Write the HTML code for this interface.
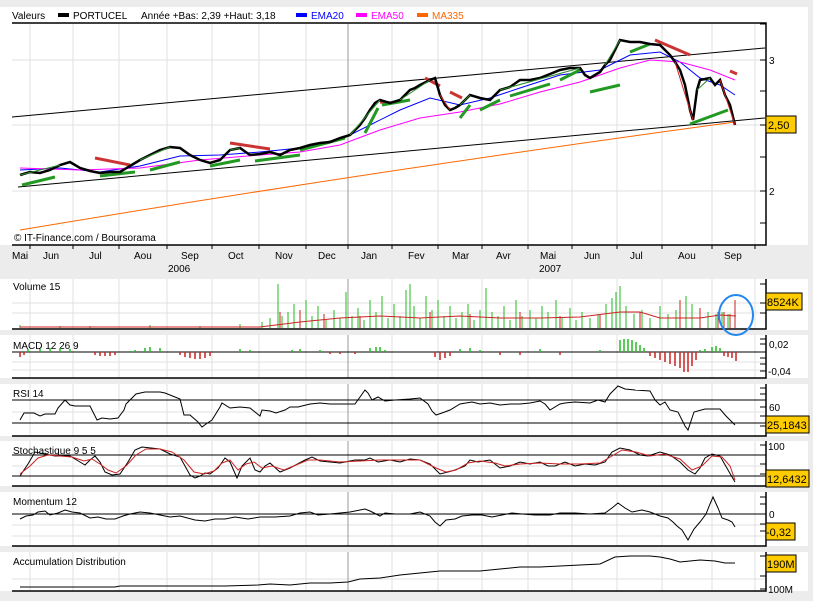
<!DOCTYPE html>
<html><head><meta charset="utf-8"><style>
html,body{margin:0;padding:0;background:#fff;}
svg{display:block;font-family:"Liberation Sans",sans-serif;}
</style></head><body>
<svg width="819" height="613" viewBox="0 0 819 613" xmlns="http://www.w3.org/2000/svg">
<rect x="0" y="0" width="813" height="601" fill="#ececec"/>
<g fill="#fff">
<rect x="0" y="7" width="808" height="238"/>
<rect x="0" y="279" width="808" height="51"/>
<rect x="0" y="335" width="808" height="43"/>
<rect x="0" y="384" width="808" height="52"/>
<rect x="0" y="441" width="808" height="45"/>
<rect x="0" y="492" width="808" height="54"/>
<rect x="0" y="552" width="808" height="39"/>
</g>
<g stroke="#e2e2e2" stroke-width="1">
<path d="M30 24V245M73 24V245M119 24V245M167 24V245M212 24V245M259 24V245M306 24V245M392 24V245M438 24V245M482 24V245M528 24V245M572 24V245M617 24V245M662 24V245M712 24V245M755 24V245"/>
<path d="M30 279V329M73 279V329M119 279V329M167 279V329M212 279V329M259 279V329M306 279V329M392 279V329M438 279V329M482 279V329M528 279V329M572 279V329M617 279V329M662 279V329M712 279V329M755 279V329"/>
<path d="M30 335V378M73 335V378M119 335V378M167 335V378M212 335V378M259 335V378M306 335V378M392 335V378M438 335V378M482 335V378M528 335V378M572 335V378M617 335V378M662 335V378M712 335V378M755 335V378"/>
<path d="M30 384V436M73 384V436M119 384V436M167 384V436M212 384V436M259 384V436M306 384V436M392 384V436M438 384V436M482 384V436M528 384V436M572 384V436M617 384V436M662 384V436M712 384V436M755 384V436"/>
<path d="M30 441V486M73 441V486M119 441V486M167 441V486M212 441V486M259 441V486M306 441V486M392 441V486M438 441V486M482 441V486M528 441V486M572 441V486M617 441V486M662 441V486M712 441V486M755 441V486"/>
<path d="M30 492V546M73 492V546M119 492V546M167 492V546M212 492V546M259 492V546M306 492V546M392 492V546M438 492V546M482 492V546M528 492V546M572 492V546M617 492V546M662 492V546M712 492V546M755 492V546"/>
<path d="M30 552V591M73 552V591M119 552V591M167 552V591M212 552V591M259 552V591M306 552V591M392 552V591M438 552V591M482 552V591M528 552V591M572 552V591M617 552V591M662 552V591M712 552V591M755 552V591"/>
<path d="M12 60H765M12 125H765M12 191H765M12 303H765M12 313H765M12 362H765M12 370H765M12 412H765M12 466H765M12 525H765M12 536H765M12 579H765"/>
</g>
<path d="M348 24V245M348 279V329M348 335V378M348 384V436M348 441V486M348 492V546M348 552V591" stroke="#999" stroke-width="1"/>
<g stroke="#000" stroke-width="1.5" fill="none">
<path d="M12 23H766V245H12"/>
<path d="M766 279V329H12M766 335V378H12M766 384V436H12M766 441V486H12M766 492V546H12M766 552V591H12"/>
</g>
<g stroke="#000" stroke-width="1">
<path d="M760 24H766M760 60H766M760 91H766M760 125H766M760 157H766M760 191H766M760 223H766"/>
<path d="M30 245v4M73 245v4M119 245v4M167 245v4M212 245v4M259 245v4M306 245v4M348 245v4M392 245v4M438 245v4M482 245v4M528 245v4M572 245v4M617 245v4M662 245v4M712 245v4M755 245v4"/>
<path d="M760 284H766M760 303H766M760 313H766M760 339H766M760 344H766M760 352H766M760 358H766M760 364H766M760 371H766M760 388H766M760 394H766M760 407H766M760 416H766M760 426H766M760 445H766M760 464H766M760 474H766M760 497H766M760 504H766M760 514H766M760 524H766M760 531H766M760 556H766M760 576H766M760 589H766"/>
<path d="M12 352H766M12 400H766M12 423H766M12 455H766M12 476H766M12 514H766"/>
</g>
<g font-size="10">
<text x="12" y="19">Valeurs</text>
<rect x="58" y="13" width="11" height="4" fill="#000"/>
<text x="73" y="19">PORTUCEL</text>
<text x="141" y="19">Année +Bas: 2,39 +Haut: 3,18</text>
<rect x="296" y="13" width="11" height="4" fill="#0000ff"/>
<text x="311" y="19" fill="#0000ff">EMA20</text>
<rect x="356" y="13" width="11" height="4" fill="#ff00ff"/>
<text x="371" y="19" fill="#ff00ff">EMA50</text>
<rect x="417" y="13" width="11" height="4" fill="#ff6600"/>
<text x="432" y="19" fill="#ff6600">MA335</text>
<text x="14" y="241">© IT-Finance.com / Boursorama</text>
<text x="769" y="64">3</text><text x="769" y="195">2</text>
<g>
<text x="12" y="259">Mai</text><text x="43" y="259">Jun</text><text x="89" y="259">Jul</text><text x="134" y="259">Aou</text><text x="181" y="259">Sep</text><text x="228" y="259">Oct</text><text x="275" y="259">Nov</text><text x="318" y="259">Dec</text><text x="361" y="259">Jan</text><text x="408" y="259">Fev</text><text x="452" y="259">Mar</text><text x="496" y="259">Avr</text><text x="540" y="259">Mai</text><text x="584" y="259">Jun</text><text x="630" y="259">Jul</text><text x="678" y="259">Aou</text><text x="724" y="259">Sep</text>
<text x="168" y="272">2006</text><text x="539" y="272">2007</text>
</g>
<text x="13" y="290">Volume 15</text>
<text x="13" y="349">MACD 12 26 9</text>
<text x="13" y="397">RSI 14</text>
<text x="13" y="454">Stochastique 9 5 5</text>
<text x="13" y="505">Momentum 12</text>
<text x="13" y="565">Accumulation Distribution</text>
<text x="769" y="348">0,02</text><text x="768" y="375">-0,04</text>
<text x="769" y="411">60</text><text x="768" y="450">100</text>
<text x="769" y="518">0</text><text x="768" y="593">100M</text>
</g>
<g fill="none" stroke-width="1">
<path d="M12 117L765 48" stroke="#000"/>
<path d="M18 187L765 118" stroke="#000"/>
<path d="M20 230Q380 170 735 122" stroke="#ff6600"/>
<path d="M20 170L60 168 100 172 140 166 180 156 220 155 260 152 300 148 340 140 370 125 400 110 430 98 460 105 490 98 520 88 560 75 600 70 630 55 660 52 680 62 700 78 720 85 735 95" stroke="#0000ff"/>
<path d="M20 168L80 170 140 168 200 160 260 155 300 152 340 145 380 130 420 118 460 112 500 104 540 92 580 82 620 68 650 60 680 62 710 70 735 80" stroke="#ff00ff"/>
</g>
<g fill="none" stroke-width="3" stroke-linecap="butt">
<path d="M95 158L130 165M230 143L270 149M380 102L392 103M425 78L440 86M450 92L462 98M655 40L690 55M730 71L737 74" stroke="#cc3333"/>
<path d="M22 185L55 177M100 176L135 172M150 170L180 162M210 166L240 160M255 161L300 155M300 150L345 138M365 133L378 108M382 105L410 100M460 118L470 105M480 110L500 100M510 96L550 84M560 80L580 70M590 92L620 85M630 52L650 44M690 124L728 110" stroke="#229922"/>
</g>
<path d="M20 175L30 172 40 173 50 170 60 165 70 162 80 168 90 171 100 173 110 172 120 172 130 166 140 160 150 155 160 150 170 147 180 148 190 155 200 160 210 163 220 160 230 150 240 148 250 155 260 154 270 152 280 155 290 150 300 148 310 145 320 143 330 142 340 138 350 135 360 125 365 118 370 110 375 103 380 100 390 103 400 100 410 90 415 88 420 85 430 80 435 78 440 95 445 105 450 110 455 108 460 105 470 95 480 98 490 100 495 95 500 90 510 87 520 80 530 80 540 78 550 74 560 70 570 68 580 68 585 75 590 78 600 72 605 65 610 60 615 50 620 40 630 42 640 42 650 44 660 45 665 50 670 55 675 62 680 70 685 85 690 110 693 120 697 90 700 80 710 78 715 85 720 80 725 95 730 105 735 125" fill="none" stroke="#000" stroke-width="2.5"/>
<path d="M20 175L60 165M140 160L170 147M230 150L240 148M350 135L380 100M400 100L430 80M460 105L470 95M500 90L580 68M605 65L620 40M697 90L710 78" fill="none" stroke="#2a8a2a" stroke-width="1"/>
<path d="M440 95L450 110M675 62L693 120M720 80L735 125" fill="none" stroke="#cc2222" stroke-width="1"/>
<g font-size="11">
<rect x="766" y="116" width="30" height="17" fill="#ffcc00" stroke="#000"/><text x="768" y="129">2,50</text>
<rect x="766" y="293" width="36" height="17" fill="#ffcc00" stroke="#000"/><text x="767" y="306">8524K</text>
<rect x="766" y="416" width="43" height="17" fill="#ffcc00" stroke="#000"/><text x="767" y="429">25,1843</text>
<rect x="766" y="470" width="43" height="17" fill="#ffcc00" stroke="#000"/><text x="767" y="483">12,6432</text>
<rect x="766" y="523" width="29" height="17" fill="#ffcc00" stroke="#000"/><text x="766" y="536">-0,32</text>
<rect x="766" y="555" width="30" height="17" fill="#ffcc00" stroke="#000"/><text x="767" y="568">190M</text>
</g>
<path d="M20 328V325M60 328V326M90 328V326M150 328V325M200 328V326M240 328V324M262 328V322M270 328V318M278 328V284M282 328V316M288 328V312M294 328V304M300 328V318M306 328V300M312 328V316M318 328V306M326 328V320M334 328V310M340 328V318M346 328V292M352 328V316M358 328V308M364 328V320M370 328V300M376 328V312M382 328V296M388 328V318M394 328V304M400 328V316M406 328V290M410 328V284M414 328V306M420 328V318M426 328V296M432 328V310M438 328V300M444 328V316M450 328V306M456 328V318M462 328V312M468 328V304M474 328V320M480 328V310M486 328V288M492 328V312M498 328V316M504 328V306M510 328V320M516 328V300M522 328V316M530 328V310M536 328V318M542 328V306M548 328V312M556 328V300M562 328V318M570 328V308M576 328V320M582 328V312M590 328V318M598 328V314M606 328V304M612 328V298M616 328V292M620 328V286M626 328V306M634 328V314M642 328V310M650 328V318M660 328V306M668 328V314M676 328V310M686 328V296M692 328V304M700 328V316M708 328V312M716 328V314M722 328V312M728 328V314" stroke="#22bb22" stroke-width="1"/>
<path d="M280 328V312M300 328V310M324 328V314M360 328V316M430 328V312M470 328V314M520 328V312M560 328V316M600 328V314M640 328V312M680 328V300M700 328V308M718 328V312M724 328V312M730 328V314M735 328V300" stroke="#cc2222" stroke-width="1"/>
<path d="M20 327H260L300 322 340 318 380 316 420 318 460 316 500 318 540 318 580 317 620 312 640 312 660 318 700 318 720 315 736 316" fill="none" stroke="#cc2222" stroke-width="1"/>
<ellipse cx="736" cy="315" rx="17" ry="20" fill="none" stroke="#2288ee" stroke-width="2"/>
<path d="M28 349v3M40 349v3M50 348v4M60 348v4M70 349v3M130 351v1M135 350v2M145 348v4M150 347v5M160 348v4M240 349v3M250 350v2M292 350v2M300 349v3M320 350v2M370 348v4M376 347v5M380 347v5M385 350v2M460 349v3M470 348v4M480 350v2M540 349v3M600 350v2M620 340v12M624 339v13M628 339v13M632 340v12M636 342v10M640 345v7M644 348v4M700 350v2M705 349v3M712 347v5M716 346v6M720 348v4" stroke="#22bb22" stroke-width="1.5"/>
<path d="M20 352v5M24 352v3M95 352v3M100 352v4M105 352v4M110 352v4M115 352v3M180 352v3M185 352v5M190 352v6M195 352v7M200 352v7M205 352v6M210 352v4M330 352v2M340 352v2M355 352v2M435 352v5M440 352v8M445 352v6M450 352v4M500 352v3M520 352v3M560 352v3M650 352v4M655 352v6M660 352v8M665 352v10M670 352v12M675 352v14M680 352v16M684 352v20M688 352v20M692 352v14M696 352v8M724 352v4M728 352v5M732 352v6M736 352v9" stroke="#cc2222" stroke-width="1.5"/>
<path d="M20 420L24 413 34 413 40 416 45 414 55 414 58 408 65 400 70 405 75 406 90 406 97 420 102 418 110 419 118 418 124 410 126 404 130 400 136 394 145 392 160 392 165 393 180 399 184 415 190 415 198 422 202 427 206 424 212 420 220 407 222 403 230 408 240 407 250 408 255 412 260 416 262 410 270 411 276 413 285 410 290 407 298 407 310 404 320 403 330 404 340 404 348 404 355 404 365 390 368 393 372 400 378 397 385 401 395 400 410 399 420 398 428 404 432 411 436 415 442 413 450 410 460 404 472 402 480 404 490 403 500 405 510 404 520 404 530 403 540 401 545 404 550 410 560 404 565 403 575 402 590 403 598 400 605 402 610 394 618 386 625 389 635 390 650 391 655 400 660 405 665 402 670 410 678 412 685 426 688 430 694 412 705 409 720 409 726 416 730 420 735 425" fill="none" stroke="#000" stroke-width="1"/>
<path d="M20 476L28 464 35 452 45 454 55 456 70 456 80 462 85 465 90 460 95 456 100 462 105 472 112 475 120 474 128 462 135 450 142 447 160 449 170 454 180 457 190 475 195 478 200 476 205 473 210 474 218 468 225 458 230 462 237 478 242 466 250 458 255 470 260 472 265 466 270 463 280 472 290 468 305 460 312 457 320 461 330 462 340 463 350 461 355 460 365 460 370 458 378 462 390 460 400 462 410 459 420 460 430 464 440 474 448 472 455 470 465 466 470 460 478 462 490 460 500 468 510 466 520 462 530 464 540 462 548 466 555 466 565 462 575 466 585 464 595 465 605 462 612 452 620 448 630 450 640 455 648 456 660 452 670 455 680 462 688 470 695 474 700 468 705 458 712 454 720 456 728 470 735 482" fill="none" stroke="#000" stroke-width="1"/>
<path d="M20 474L30 466 38 458 48 455 60 456 72 457 84 461 92 459 100 464 108 470 116 473 126 466 136 455 146 449 160 449 172 452 184 460 194 472 204 474 214 471 222 463 230 460 238 470 246 464 254 462 262 468 272 466 284 470 296 465 308 460 320 460 340 462 360 461 380 460 400 460 420 460 436 468 446 472 456 470 468 463 480 461 495 463 505 466 520 464 540 463 560 464 580 464 600 463 612 456 622 450 636 452 650 456 664 454 680 459 692 470 702 466 712 456 722 457 730 466 735 480" fill="none" stroke="#cc2222" stroke-width="1"/>
<path d="M20 519L26 516 33 515 38 512 45 511 50 515 58 513 65 510 72 512 80 513 90 518 98 517 106 519 115 519 123 516 130 514 140 512 150 513 160 515 170 517 180 516 195 520 205 521 215 519 225 519 235 517 248 519 260 517 275 517 290 516 300 513 310 512 318 515 330 514 340 513 350 512 365 509 370 511 380 516 385 513 395 514 410 514 420 512 430 516 435 522 440 526 446 520 455 519 462 516 472 515 482 515 492 517 502 515 512 513 522 514 535 515 550 515 560 513 575 513 590 514 605 513 612 508 618 503 625 508 632 512 642 510 650 512 660 516 668 518 673 522 677 526 682 530 688 540 694 529 700 522 706 514 710 504 713 497 718 508 722 518 728 520 732 522 735 527" fill="none" stroke="#000" stroke-width="1"/>
<path d="M20 587L115 587 120 586 225 586 258 585 270 584 290 585 310 583 330 583 348 582 360 579 380 578 400 575 420 573 440 571 460 571 480 571 500 569 520 567 540 567 560 566 580 565 600 564 615 557 630 556 650 556 660 557 670 559 680 562 690 561 700 560 715 561 725 563 735 563" fill="none" stroke="#000" stroke-width="1"/>
</svg>
</body></html>
